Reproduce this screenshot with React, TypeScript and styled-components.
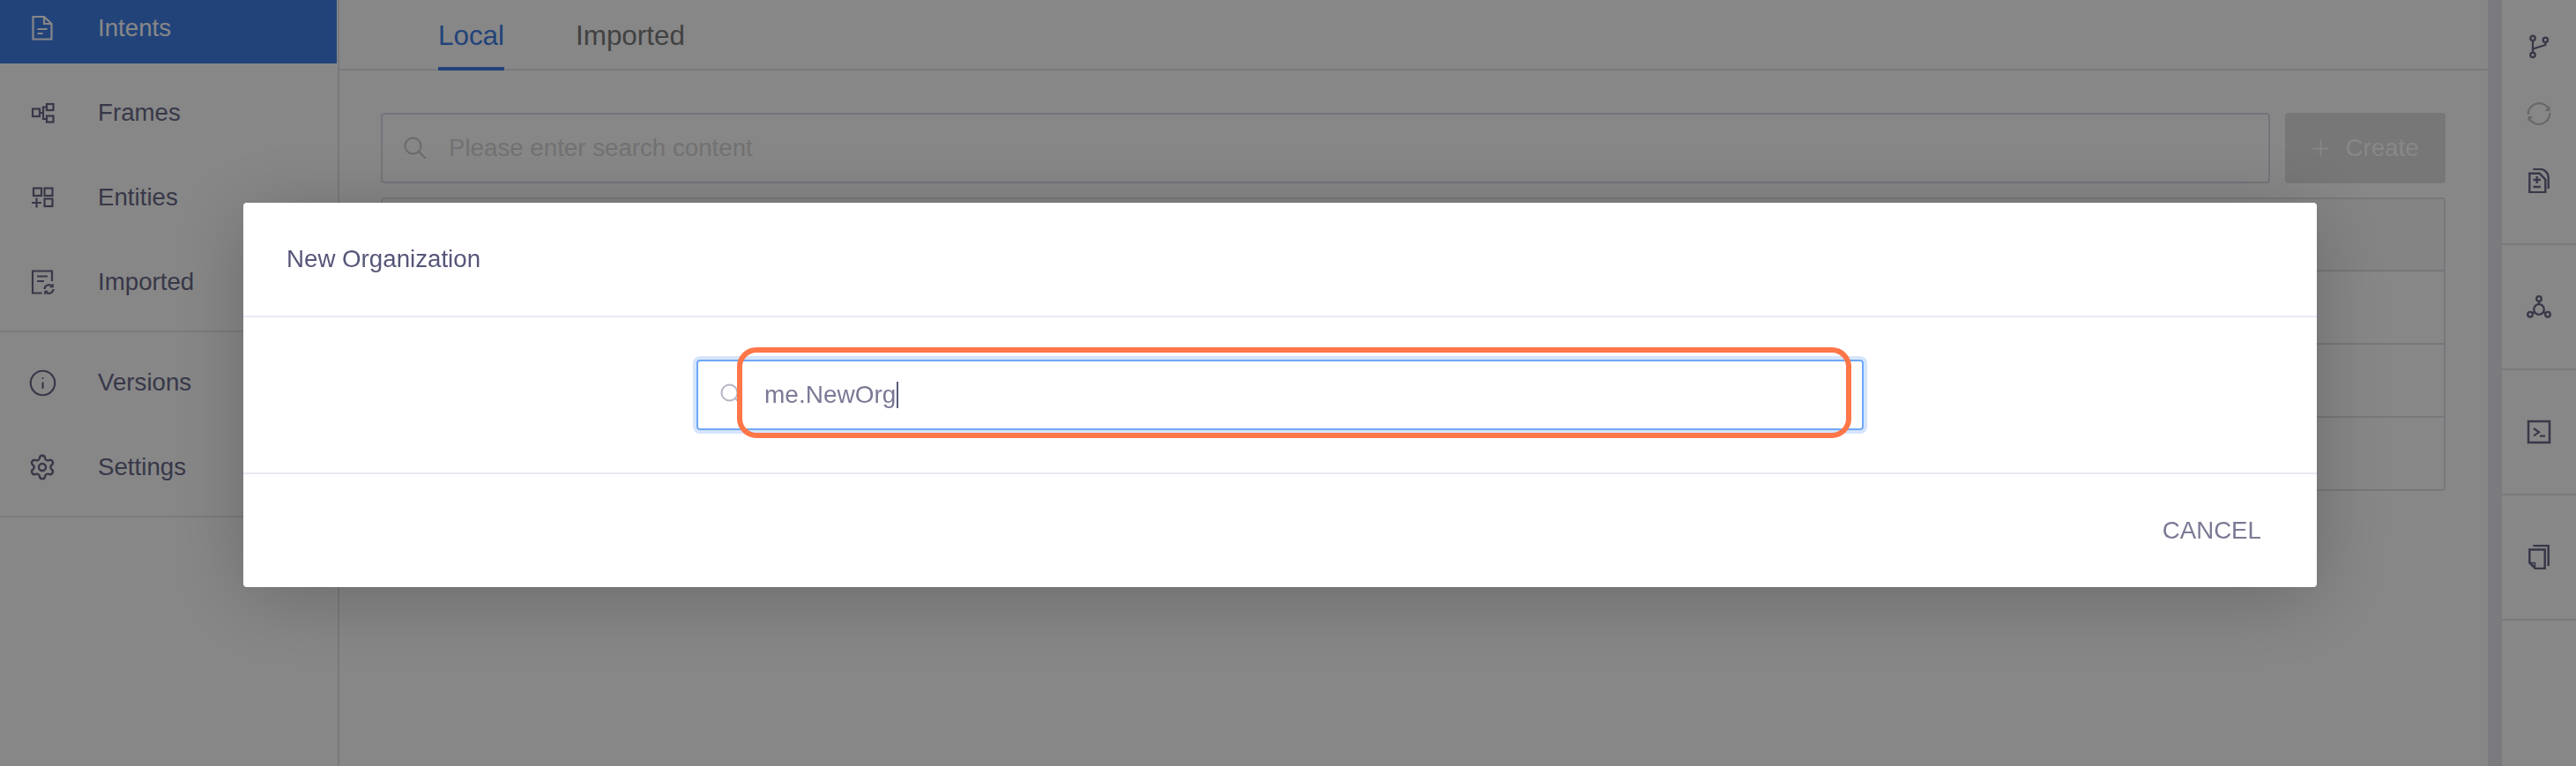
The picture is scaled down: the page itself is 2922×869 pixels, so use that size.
import React from "react";
import styled, { createGlobalStyle } from "styled-components";
import { Info, Settings, Plus } from "lucide-react";

const Global = createGlobalStyle`
  html, body { margin: 0; padding: 0; height: 100%; background: #fff; overflow: hidden; }
  * { box-sizing: border-box; }
  body { font-family: "Liberation Sans", Arial, sans-serif; }
`;

const Page = styled.div`
  display: flex;
  width: 2922px;
  height: 869px;
  overflow: hidden;
  background: #fff;
`;

const Sidebar = styled.aside`
  flex: 0 0 385px;
  border-right: 2px solid #e4e4f0;
  padding-right: 1px;
`;

const NavGroup = styled.div`
  display: flex;
  flex-direction: column;
  gap: 14px;
  padding: 15px 0;
  border-bottom: 2px solid #e6e6ee;
  &:first-child { margin-top: -27px; padding-top: 17px; }
`;

const NavRow = styled.div<{ $active?: boolean }>`
  display: flex;
  align-items: center;
  gap: 49px;
  height: 82px;
  padding: 2px 0 0 34px;
  font-size: 27.7px;
  color: ${(p) => (p.$active ? "#fff" : "#6a6a8a")};
  background: ${(p) => (p.$active ? "#407fe7" : "transparent")};
`;

const NavIcon = styled.span`
  flex: 0 0 28px;
  width: 28px;
  min-width: 0;
  height: 28px;
  display: flex;
  align-items: center;
  justify-content: center;
  svg { flex-shrink: 0; }
`;

const Main = styled.main`
  flex: 1;
  min-width: 0;
  display: flex;
  flex-direction: column;
`;

const TabBar = styled.div`
  display: flex;
  gap: 81px;
  height: 80px;
  padding-left: 112px;
  border-bottom: 2px solid #e6e6ee;
`;

const Tab = styled.div<{ $active?: boolean }>`
  height: 80px;
  line-height: 82px;
  font-size: 31.4px;
  color: ${(p) => (p.$active ? "#407fe7" : "#7c7c7c")};
  border-bottom: 4px solid ${(p) => (p.$active ? "#407fe7" : "transparent")};
`;

const Content = styled.div`
  display: flex;
  flex-direction: column;
  gap: 16px;
  padding: 48px 48px 0 47px;
`;

const Toolbar = styled.div`
  display: flex;
  gap: 17px;
  height: 80px;
`;

const SearchBox = styled.div`
  flex: 1;
  display: flex;
  align-items: center;
  gap: 25px;
  padding-left: 24px;
  border: 2px solid #dcdce8;
  border-radius: 4px;
  font-size: 27.7px;
  color: #d8d8d8;
  svg { color: #c8c8c8; }
`;

const CreateButton = styled.div`
  flex: 0 0 182px;
  display: flex;
  align-items: center;
  justify-content: center;
  gap: 13px;
  padding-right: 4px;
  border-radius: 4px;
  background: #e0e0e0;
  color: #fff;
  font-size: 27.7px;
`;

const Table = styled.div`
  border: 2px solid #e0e0ea;
  border-radius: 4px;
`;

const TableRow = styled.div`
  height: 83px;
  border-bottom: 2px solid #e0e0ea;
  &:first-child { height: 82px; background: #fafafa; }
  &:last-child { height: 81px; border-bottom: 0; }
`;

const ScrollTrack = styled.div`
  flex: 0 0 16px;
  background: #e8e8f0;
`;

const Rail = styled.aside`
  flex: 0 0 84px;
  display: flex;
  flex-direction: column;
`;

const RailGroup = styled.div<{ $first?: boolean }>`
  display: flex;
  flex-direction: column;
  height: ${(p) => (p.$first ? "278px" : "142px")};
  padding: ${(p) => (p.$first ? "15px 0 33px" : "0")};
  border-bottom: 2px solid #e6e6ee;
`;

const RailIcon = styled.div<{ $muted?: boolean }>`
  flex: 1;
  display: flex;
  align-items: center;
  justify-content: center;
  color: ${(p) => (p.$muted ? "#c4c4c8" : "#6a6a8a")};
`;

const Overlay = styled.div`
  position: fixed;
  inset: 0;
  display: flex;
  justify-content: flex-start;
  align-items: flex-start;
  padding: 230px 0 0 276px;
  background: rgba(0, 0, 0, 0.47);
`;

const Modal = styled.section`
  width: 2352px;
  height: 436px;
  display: flex;
  flex-direction: column;
  background: #fff;
  border-radius: 4px;
  box-shadow: 0 12px 90px rgba(0, 0, 0, 0.22);
`;

const ModalHeader = styled.header`
  flex: 0 0 130px;
  display: flex;
  align-items: center;
  padding-left: 49px;
  border-bottom: 2px solid #e9e9f5;
  font-size: 27.7px;
  color: #56567a;
`;

const ModalBody = styled.div`
  flex: 0 0 178px;
  display: flex;
  align-items: center;
  justify-content: center;
  border-bottom: 2px solid #e9e9f5;
`;

const ModalFooter = styled.footer`
  flex: 1;
  display: flex;
  align-items: center;
  justify-content: flex-end;
  padding-right: 63px;
  font-size: 27.7px;
  color: #7a7a96;
`;

const OrgInput = styled.div`
  position: relative;
  width: 1324px;
  height: 80px;
  display: flex;
  align-items: center;
  padding-left: 25px;
  border: 2px solid #6ea8f7;
  border-radius: 4px;
  box-shadow: 0 0 0 4px #d6e4fb;
  font-size: 28px;
  color: #7a7a96;
  svg { color: #b4b4c4; flex: 0 0 26px; }
`;

const OrgValue = styled.span`
  margin-left: 24px;
`;

const Caret = styled.span`
  display: inline-block;
  width: 2px;
  height: 30px;
  margin-left: 1px;
  background: #5a5a7a;
`;

const Annotation = styled.div`
  position: absolute;
  left: 44px;
  top: -16px;
  width: 1264px;
  height: 103px;
  border: 6px solid #ff7648;
  border-radius: 22px;
  pointer-events: none;
`;

type IconProps = { children: React.ReactNode; w?: number };
const Ico = ({ children, w = 2.2 }: IconProps) => (
  <svg width="28" height="28" viewBox="0 0 28 28" fill="none" stroke="currentColor" strokeWidth={w}>
    {children}
  </svg>
);

const SearchGlyph = () => (
  <svg width="26" height="26" viewBox="0 0 26 26" fill="none" stroke="currentColor" strokeWidth="2">
    <circle cx="10.500" cy="10.500" r="9" />
    <path d="M17 17l7.500 7.500" />
  </svg>
);

const IntentIcon = () => (
  <Ico>
    <path d="M3.500 1H16l8.500 8v17.500h-21z" />
    <path d="M16 1v8h8.500M8.500 15h11M8.500 20h6" />
  </Ico>
);
const FramesIcon = () => (
  <Ico>
    <rect x="3" y="9.500" width="8" height="8.500" />
    <rect x="19" y="4" width="7.500" height="7" />
    <rect x="19" y="17.500" width="7.500" height="7" />
    <path d="M11 14h4.500M19 7.500h-4v13.500h4" />
  </Ico>
);
const EntitiesIcon = () => (
  <Ico>
    <rect x="4" y="3.500" width="9" height="8.500" />
    <rect x="16.500" y="3.500" width="9" height="8.500" />
    <rect x="16.500" y="15.500" width="9" height="8.500" />
    <path d="M2 20h11M7.500 14.500v11" />
  </Ico>
);
const ImportedIcon = () => (
  <Ico>
    <path d="M25 13V1.500H3v25h10.500" />
    <path d="M8 7.500h12M8 13h8" />
    <path d="M16.500 22a5 5 0 0 1 8.600-3.200M26.500 22a5 5 0 0 1-8.600 3.200" />
    <path d="M26 16v3.500h-3.500M17 28v-3.500h3.500" strokeWidth={1.6} />
  </Ico>
);
const BranchIcon = () => (
  <Ico w={2.3}>
    <circle cx="7" cy="4.300" r="2.700" />
    <circle cx="21.300" cy="6.300" r="2.700" />
    <circle cx="7" cy="23.300" r="2.700" />
    <path d="M7 7v13.600M21.300 9v3L7 16.500" />
  </Ico>
);
const SyncIcon = () => (
  <Ico>
    <path d="M1.600 15a12.600 12.600 0 0 1 23-7.400M26.400 13a12.600 12.600 0 0 1-23 7.400" />
    <path d="M26.500 5v6h-6zM1.500 23v-6h6z" fill="currentColor" stroke="none" />
  </Ico>
);
const DiffIcon = () => (
  <Ico w={2.4}>
    <path d="M3.300 5.700h11.500l6.500 7v14.600h-18z" />
    <path d="M7.300 0.900h9.200c4.500 1 8.200 4.500 8.200 9V23" />
    <path d="M11.700 9v8M7.500 13h8.400M7.500 21h8.400" />
  </Ico>
);
const GraphIcon = () => (
  <Ico w={2.3}>
    <circle cx="14" cy="17" r="5.800" />
    <circle cx="14" cy="5" r="2.800" />
    <circle cx="4" cy="22.700" r="2.800" />
    <circle cx="24" cy="22.700" r="2.800" />
    <path d="M14 7.800v3.400M9 20l-2.600 1.400M19 20l2.600 1.400" />
  </Ico>
);
const TerminalIcon = () => (
  <Ico w={2.5}>
    <rect x="2" y="2" width="24" height="24" />
    <path d="M8 10l6 4.300-6 4M15 18.700h6" strokeWidth={2.2} />
  </Ico>
);
const CopyIcon = () => (
  <Ico w={2.5}>
    <path d="M3.300 5.500h17.400v21.600H10l-6.700-6.700z" />
    <path d="M7.300 1h17.400v23" />
    <path d="M4.500 20.500h5v5z" strokeWidth={1.5} />
  </Ico>
);

const topNav: [string, React.ReactNode][] = [
  ["Intents", <IntentIcon />],
  ["Frames", <FramesIcon />],
  ["Entities", <EntitiesIcon />],
  ["Imported", <ImportedIcon />],
];
const bottomNav: [string, React.ReactNode][] = [
  ["Versions", <Info size={33} strokeWidth={1.6} />],
  ["Settings", <Settings size={32} strokeWidth={1.8} />],
];

export default function App() {
  return (
    <>
      <Global />
      <Page>
        <Sidebar>
          <NavGroup>
            {topNav.map(([label, icon], i) => (
              <NavRow key={label} $active={i === 0}>
                <NavIcon>{icon}</NavIcon>
                {label}
              </NavRow>
            ))}
          </NavGroup>
          <NavGroup>
            {bottomNav.map(([label, icon]) => (
              <NavRow key={label}>
                <NavIcon>{icon}</NavIcon>
                {label}
              </NavRow>
            ))}
          </NavGroup>
        </Sidebar>
        <Main>
          <TabBar>
            <Tab $active>Local</Tab>
            <Tab>Imported</Tab>
          </TabBar>
          <Content>
            <Toolbar>
              <SearchBox>
                <SearchGlyph />
                Please enter search content
              </SearchBox>
              <CreateButton>
                <Plus size={29} strokeWidth={1.3} />
                Create
              </CreateButton>
            </Toolbar>
            <Table>
              <TableRow />
              <TableRow />
              <TableRow />
              <TableRow />
            </Table>
          </Content>
        </Main>
        <ScrollTrack />
        <Rail>
          <RailGroup $first>
            <RailIcon><BranchIcon /></RailIcon>
            <RailIcon $muted><SyncIcon /></RailIcon>
            <RailIcon><DiffIcon /></RailIcon>
          </RailGroup>
          <RailGroup><RailIcon><GraphIcon /></RailIcon></RailGroup>
          <RailGroup><RailIcon><TerminalIcon /></RailIcon></RailGroup>
          <RailGroup><RailIcon><CopyIcon /></RailIcon></RailGroup>
        </Rail>
      </Page>
      <Overlay>
        <Modal>
          <ModalHeader>New Organization</ModalHeader>
          <ModalBody>
            <OrgInput>
              <SearchGlyph />
              <OrgValue>me.NewOrg</OrgValue>
              <Caret />
              <Annotation />
            </OrgInput>
          </ModalBody>
          <ModalFooter>CANCEL</ModalFooter>
        </Modal>
      </Overlay>
    </>
  );
}
